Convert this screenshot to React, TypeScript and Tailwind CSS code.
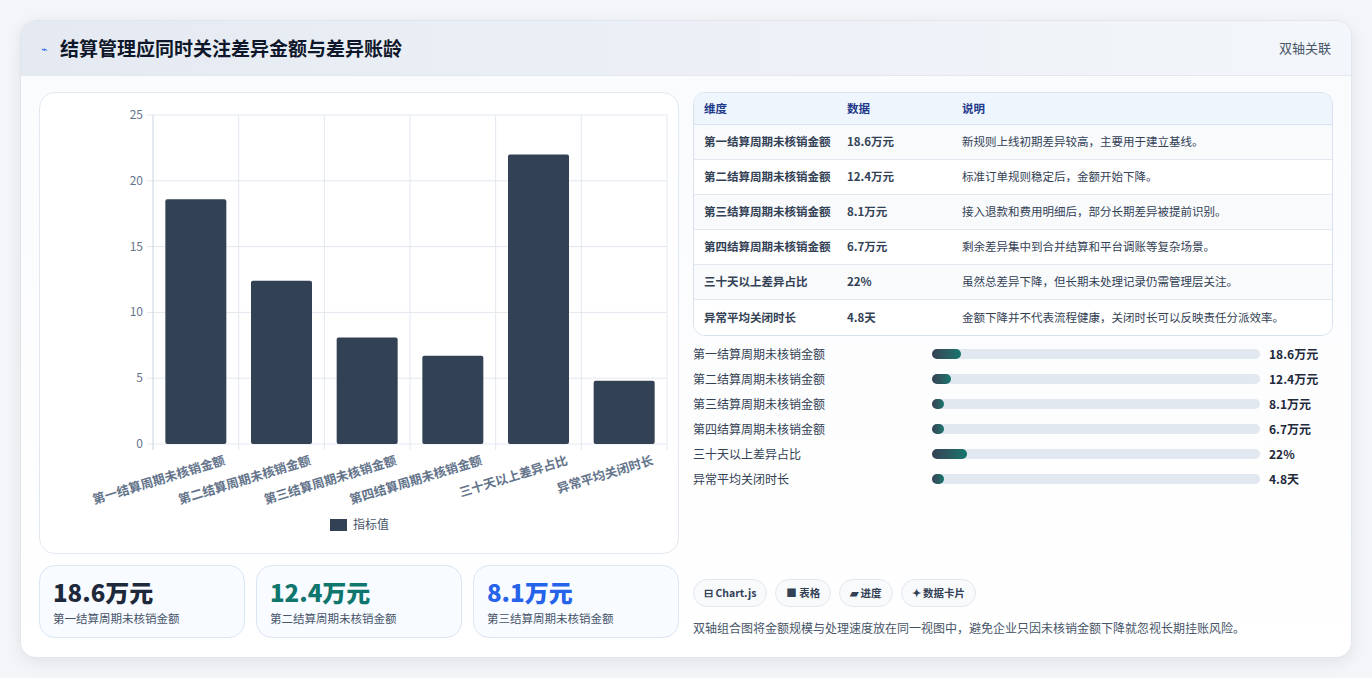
import React from 'react';

const rows = [
  { name: '第一结算周期未核销金额', value: '18.6万元', v: 18.6, note: '新规则上线初期差异较高，主要用于建立基线。', w: 29 },
  { name: '第二结算周期未核销金额', value: '12.4万元', v: 12.4, note: '标准订单规则稳定后，金额开始下降。', w: 19 },
  { name: '第三结算周期未核销金额', value: '8.1万元', v: 8.1, note: '接入退款和费用明细后，部分长期差异被提前识别。', w: 12 },
  { name: '第四结算周期未核销金额', value: '6.7万元', v: 6.7, note: '剩余差异集中到合并结算和平台调账等复杂场景。', w: 12 },
  { name: '三十天以上差异占比', value: '22%', v: 22, note: '虽然总差异下降，但长期未处理记录仍需管理层关注。', w: 35 },
  { name: '异常平均关闭时长', value: '4.8天', v: 4.8, note: '金额下降并不代表流程健康，关闭时长可以反映责任分派效率。', w: 12 },
];

const font = { fontFamily: '"Noto Sans CJK SC", "Liberation Sans", sans-serif' };

function Chart() {
  const x0 = 113, x1 = 627, y0 = 22, y1 = 351;
  const step = (x1 - x0) / 6;
  const sy = (v: number) => y1 - (v / 25) * (y1 - y0);
  return (
    <svg width="640" height="461" viewBox="0 0 640 461" className="block">
      {[0, 5, 10, 15, 20, 25].map(t => (
        <g key={t}>
          <line x1={x0 - 6} x2={x1} y1={sy(t)} y2={sy(t)} stroke="#e2e8f0" />
          <text x={x0 - 10} y={sy(t) + 4} textAnchor="end" fontSize="12" fill="#64748b" style={font}>{t}</text>
        </g>
      ))}
      {[0, 1, 2, 3, 4, 5, 6].map(i => (
        <line key={i} x1={x0 + i * step} x2={x0 + i * step} y1={y0} y2={y1 + 6} stroke={i === 0 ? '#cbd5e1' : '#e2e8f0'} />
      ))}
      {rows.map((r, i) => {
        const cx = x0 + step * i + step / 2;
        return (
          <g key={r.name}>
            <rect x={cx - 30.5} y={sy(r.v)} width="61" height={y1 - sy(r.v)} rx="2" fill="#334155" />
            <text x={cx + 30} y={y1 + 20} textAnchor="end" fontSize="12.5" fontWeight="600" fill="#64748b" transform={`rotate(-17 ${cx + 30} ${y1 + 20})`} style={font}>{r.name}</text>
          </g>
        );
      })}
      <rect x="290" y="426" width="17" height="12" fill="#334155" />
      <text x="313" y="436" fontSize="12" fill="#475569" style={font}>指标值</text>
    </svg>
  );
}

export default function App() {
  return (
    <div className="w-[1372px] h-[678px] bg-[#f3f5f8] p-[20px]" style={font}>
      <div className="h-[638px] rounded-2xl bg-white border border-[#dfe6ee] shadow-[0_4px_16px_rgba(15,23,42,0.08)] overflow-hidden flex flex-col">
        <div className="h-[55px] flex items-center justify-between px-5 bg-gradient-to-r from-[#e5eaf2] to-[#f3f6fa] border-b border-[#e2e8f0]">
          <div className="flex items-center gap-3">
            <span className="text-[#2563eb] text-[11px]">⌁</span>
            <span className="text-[19px] font-bold text-[#0f172a]">结算管理应同时关注差异金额与差异账龄</span>
          </div>
          <span className="text-[13px] text-[#475569]">双轴关联</span>
        </div>
        <div className="flex-1 flex gap-[14px] px-[18px] pt-[16px] pb-[18px] bg-gradient-to-b from-[#fafbfd] to-white">
          <div className="w-[640px] flex flex-col gap-[11px]">
            <div className="h-[462px] rounded-2xl border border-[#e2e8f0] bg-white overflow-hidden">
              <Chart />
            </div>
            <div className="grid grid-cols-3 gap-[11px]">
              {[
                ['18.6万元', 'text-[#1e293b]', rows[0].name],
                ['12.4万元', 'text-[#0f766e]', rows[1].name],
                ['8.1万元', 'text-[#2563eb]', rows[2].name],
              ].map(([v, c, n]) => (
                <div key={n} className="h-[73px] rounded-2xl border border-[#dbe6f3] bg-[#f8fbff] px-[13px] pt-[10px]">
                  <div className={`text-[24px] leading-[32px] font-extrabold ${c}`}>{v}</div>
                  <div className="text-[11.5px] text-[#475569] mt-[2px]">{n}</div>
                </div>
              ))}
            </div>
          </div>
          <div className="w-[640px] flex flex-col">
            <div className="rounded-xl border border-[#d7e2ee] overflow-hidden text-[11.5px]">
              <div className="flex h-[32px] items-center bg-[#eef5fd] border-b border-[#d7e2ee] font-semibold text-[#1e3a8a]">
                <div className="w-[153px] pl-[10px]">维度</div>
                <div className="w-[115px]">数据</div>
                <div>说明</div>
              </div>
              {rows.map((r, i) => (
                <div key={r.name} className={`flex h-[35px] items-center ${i % 2 ? 'bg-white' : 'bg-[#f8fafc]'} ${i < 5 ? 'border-b border-[#e2e8f0]' : ''}`}>
                  <div className="w-[153px] pl-[10px] font-semibold text-[#334155]">{r.name}</div>
                  <div className="w-[115px] font-semibold text-[#334155]">{r.value}</div>
                  <div className="text-[#334155]">{r.note}</div>
                </div>
              ))}
            </div>
            <div className="mt-[9px] flex flex-col gap-[7px]">
              {rows.map(r => (
                <div key={r.name} className="flex items-center h-[18px] text-[12px]">
                  <div className="w-[239px] text-[#334155]">{r.name}</div>
                  <div className="w-[328px] h-[10px] rounded-full bg-[#e2e8f0]">
                    <div className="h-[10px] rounded-full bg-gradient-to-r from-[#334155] to-[#0f766e]" style={{ width: r.w }} />
                  </div>
                  <div className="ml-[9px] font-bold text-[#1e293b]">{r.value}</div>
                </div>
              ))}
            </div>
            <div className="flex-1" />
            <div className="flex gap-[8px] mb-[12px]">
              {['⊟ Chart.js', '■ 表格', '▰ 进度', '✦ 数据卡片'].map(t => (
                <span key={t} className="h-[28px] px-[10px] flex items-center rounded-full border border-[#e2e8f0] bg-[#f8fafc] text-[10.5px] font-semibold text-[#334155]">{t}</span>
              ))}
            </div>
            <div className="text-[12px] text-[#475569] mb-[2px]">双轴组合图将金额规模与处理速度放在同一视图中，避免企业只因未核销金额下降就忽视长期挂账风险。</div>
          </div>
        </div>
      </div>
    </div>
  );
}
